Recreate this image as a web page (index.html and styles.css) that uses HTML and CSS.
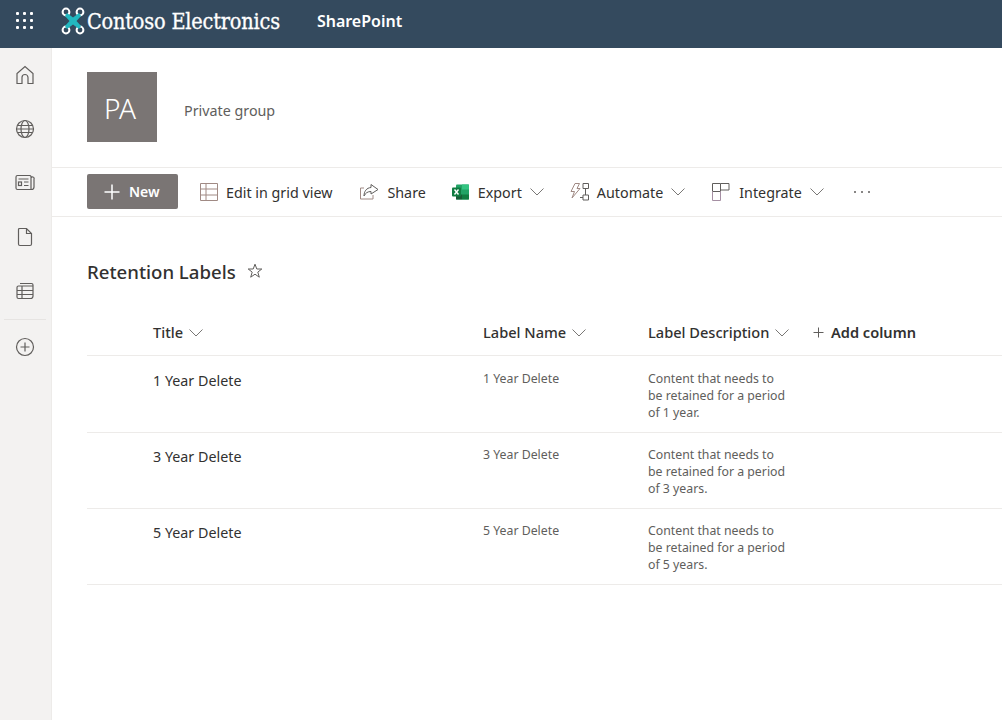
FILE: index.html
```html
<!DOCTYPE html>
<html lang="en">
<head>
	<meta charset="utf-8">
	<title>Retention Labels</title>
	<link rel="stylesheet" href="styles.css">
</head>
<body>

	<header class="suite-bar">
		<svg class="waffle" viewBox="0 0 18 18" width="18" height="18" fill="#fff">
			<rect x="0" y="0" width="3" height="3" rx="1"/><rect x="7" y="0" width="3" height="3" rx="1"/><rect x="14" y="0" width="3" height="3" rx="1"/>
			<rect x="0" y="7" width="3" height="3" rx="1"/><rect x="7" y="7" width="3" height="3" rx="1"/><rect x="14" y="7" width="3" height="3" rx="1"/>
			<rect x="0" y="14" width="3" height="3" rx="1"/><rect x="7" y="14" width="3" height="3" rx="1"/><rect x="14" y="14" width="3" height="3" rx="1"/>
		</svg>
		<svg class="logo" viewBox="0 0 24 28" width="24" height="28">
			<g fill="none" stroke="#fff" stroke-width="2">
				<circle cx="5" cy="5" r="3.4"/><circle cx="19" cy="5" r="3.4"/><circle cx="5" cy="23" r="3.4"/><circle cx="19" cy="23" r="3.4"/>
			</g>
			<path d="M6 6 L12 10.5 L18 6 L20 9 L15.5 14 L20 19 L18 22 L12 17.5 L6 22 L4 19 L8.500 14 L4 9 Z" fill="#22b8c0"/>
		</svg>
		<span class="brand">Contoso Electronics</span>
		<span class="app-name">SharePoint</span>
	</header>

	<div class="shell">
		<nav class="side-rail">
			<svg viewBox="0 0 20 20" width="20" height="20"><path d="M2 18.500V8.500L10 1.500L18 8.500V18.500H13V12.500A3 3 0 0 0 7 12.500V18.500Z"/></svg>
			<svg viewBox="0 0 20 20" width="20" height="20"><circle cx="10" cy="10" r="8.500"/><ellipse cx="10" cy="10" rx="4" ry="8.500"/><path d="M2.500 6.500H17.500M1.500 10H18.500M2.500 13.500H17.500"/></svg>
			<svg viewBox="0 0 20 20" width="20" height="20"><path d="M16 4.500V3.500A1.500 1.500 0 0 0 14.500 2.500H2.500A1.500 1.500 0 0 0 1 4V15A1.500 1.500 0 0 0 2.500 16.500H16.500A2.500 2.500 0 0 0 19 14V6A1.500 1.500 0 0 0 16 5V16"/><path d="M3.500 6H13.500M9 9H13.500M9 12.500H13.500"/><rect x="3.500" y="9" width="3" height="3.500"/></svg>
			<svg viewBox="0 0 20 20" width="20" height="20"><path d="M4.500 1.500H11.500L16.500 6.500V17A1.500 1.500 0 0 1 15 18.500H5A1.500 1.500 0 0 1 3.500 17V2.500A1 1 0 0 1 4.500 1.500ZM11.500 1.500V6.500H16.500"/></svg>
			<svg viewBox="0 0 20 20" width="20" height="20"><path d="M5 2.500H16.500A1.500 1.500 0 0 1 18 4V15A2.500 2.500 0 0 1 15.500 17.500H3.500A1.500 1.500 0 0 1 2 16V6.500A1.500 1.500 0 0 1 3.500 5H18M2 9.500H18M2 13.500H18M7 5V17.500"/></svg>
			<div class="rail-rule"></div>
			<svg viewBox="0 0 20 20" width="20" height="20"><circle cx="10" cy="10" r="8.500"/><path d="M10 5.500V14.500M5.500 10H14.500"/></svg>
		</nav>

		<main class="content">
			<section class="site-head">
				<div class="site-tile">PA</div>
				<span class="site-type">Private group</span>
			</section>

			<section class="command-bar">
				<button class="btn-new">
					<svg viewBox="0 0 16 16" width="16" height="16"><path d="M8 0.500V15.500M0.500 8H15.500"/></svg>
					New
				</button>
				<span class="cmd cmd-grid">
					<svg class="ico" viewBox="0 0 18 18" width="18" height="18"><path class="tan" d="M0.500 0.500H17.500V17.500H0.500ZM0.500 6H17.500M0.500 12H17.500M6 0.500V17.500"/></svg>
					Edit in grid view
				</span>
				<span class="cmd cmd-share">
					<svg class="ico" viewBox="0 0 19 18" width="19" height="18"><path class="tan" d="M4 5H0.500V16H13V12"/><path class="grey" d="M11 1.500L18 6.500L11 11V8.500C7.500 8.500 5.500 10 4 13C4 8.500 6.500 4.800 11 4.500Z"/></svg>
					Share
				</span>
				<span class="cmd cmd-export">
					<svg class="ico" viewBox="0 0 17 16" width="17" height="16">
						<rect x="4" y="0.500" width="13" height="15" rx="1" fill="#21a366"/>
						<rect x="10" y="0.500" width="7" height="5" fill="#33c481"/>
						<rect x="10" y="10.500" width="7" height="5" fill="#107c41"/>
						<rect x="4" y="10.500" width="6" height="5" fill="#185c37"/>
						<rect x="0" y="3.500" width="9" height="9" rx="1" fill="#107c41"/>
						<path d="M2.500 5.500L6.500 10.500M6.500 5.500L2.500 10.500" class="white"/>
					</svg>
					Export
					<svg class="chev" viewBox="0 0 14 8" width="14" height="8"><path d="M0.500 0.500L7 7L13.500 0.500"/></svg>
				</span>
				<span class="cmd cmd-automate">
					<svg class="ico" viewBox="0 0 19 18" width="19" height="18"><path class="tan" d="M5 0.500H9.500L7 5.500H10L2 15L4.500 8.500H1Z"/><path class="grey" d="M13 0.500H18.500V5.500H13ZM13 12H18.500V17H13ZM15.500 5.500V12M10 14.500H13"/></svg>
					Automate
					<svg class="chev" viewBox="0 0 14 8" width="14" height="8"><path d="M0.500 0.500L7 7L13.500 0.500"/></svg>
				</span>
				<span class="cmd cmd-integrate">
					<svg class="ico" viewBox="0 0 18 18" width="18" height="18"><path class="grey" d="M0.500 0.500H8.500V8.500H0.500ZM8.500 0.500H17V7H8.500"/><path class="mauve" d="M0.500 8.500V17.500H8.500V8.500"/></svg>
					Integrate
					<svg class="chev" viewBox="0 0 14 8" width="14" height="8"><path d="M0.500 0.500L7 7L13.500 0.500"/></svg>
				</span>
				<span class="cmd-more"><i></i><i></i><i></i></span>
			</section>

			<section class="list-title">
				<h1>Retention Labels</h1>
				<svg class="star" viewBox="0 0 16 16" width="16" height="16"><path d="M8 1.200L9.800 6H14.800L10.800 9.100L12.300 14.200L8 11.200L3.700 14.200L5.200 9.100L1.200 6H6.200Z"/></svg>
			</section>

			<section class="list">
				<div class="list-row list-head">
					<div class="col-title">Title <svg class="chev-sm" viewBox="0 0 14 8" width="14" height="8"><path d="M0.500 0.500L7 7L13.500 0.500"/></svg></div>
					<div>Label Name <svg class="chev-sm" viewBox="0 0 14 8" width="14" height="8"><path d="M0.500 0.500L7 7L13.500 0.500"/></svg></div>
					<div>Label Description <svg class="chev-sm" viewBox="0 0 14 8" width="14" height="8"><path d="M0.500 0.500L7 7L13.500 0.500"/></svg></div>
					<div class="col-add"><svg viewBox="0 0 11 11" width="11" height="11"><path d="M5.500 0.500V10.500M0.500 5.500H10.500"/></svg>Add column</div>
				</div>
				<div class="list-row">
					<div class="col-title cell-title">1 Year Delete</div>
					<div class="cell">1 Year Delete</div>
					<div class="cell">Content that needs to be retained for a period of 1 year.</div>
				</div>
				<div class="list-row">
					<div class="col-title cell-title">3 Year Delete</div>
					<div class="cell">3 Year Delete</div>
					<div class="cell">Content that needs to be retained for a period of 3 years.</div>
				</div>
				<div class="list-row">
					<div class="col-title cell-title">5 Year Delete</div>
					<div class="cell">5 Year Delete</div>
					<div class="cell">Content that needs to be retained for a period of 5 years.</div>
				</div>
			</section>
		</main>
	</div>

</body>
</html>
```

FILE: styles.css
```css
html, body {
	margin: 0;
	height: 100%;
	overflow: hidden;
}
body {
	font-family: 'Noto Sans', 'Open Sans', sans-serif;
	color: #323130;
	background-color: #fff;
}
svg {
	display: block;
	flex: none;
}

/* top bar */
.suite-bar {
	display: flex;
	align-items: center;
	height: 48px;
	box-sizing: border-box;
	padding-bottom: 6px;
	background-color: #344a5e;
	color: #fff;
}
.waffle {
	margin-left: 16px;
}
.logo {
	margin-left: 27px;
}
.brand {
	margin-left: 2px;
	font-family: 'DejaVu Serif', serif;
	font-size: 21.500px;
	font-stretch: condensed;
	letter-spacing: -0.200px;
	-webkit-text-stroke: 0.3px #fff;
}
.app-name {
	margin-left: 37px;
	font-size: 16px;
	font-weight: 600;
}

.shell {
	display: flex;
	height: 672px;
}

/* left rail */
.side-rail {
	display: flex;
	flex-direction: column;
	align-items: center;
	flex: none;
	width: 52px;
	padding: 17px 1px 0 0;
	box-sizing: border-box;
	background-color: #f3f2f1;
	border-right: 1px solid #edebe9;
	gap: 34px;
}
.side-rail svg {
	fill: none;
	stroke: #605e5c;
	stroke-width: 1.200;
}
.rail-rule {
	width: 42px;
	height: 1px;
	margin: -16px 0 -17px;
	background-color: #e6e4e2;
}

.content {
	flex: 1;
	min-width: 0;
}

/* site header */
.site-head {
	display: flex;
	align-items: flex-start;
	height: 95px;
	padding: 24px 0 0 35px;
	border-bottom: 1px solid #edebe9;
}
.site-tile {
	display: flex;
	align-items: center;
	justify-content: center;
	width: 70px;
	height: 70px;
	box-sizing: border-box;
	padding: 2px 4px 0 0;
	background-color: #7a7574;
	color: #fff;
	font-size: 28px;
	font-weight: 300;
}
.site-type {
	margin: 29px 0 0 27px;
	font-size: 14.300px;
	color: #605e5c;
}

/* command bar */
.command-bar {
	display: flex;
	align-items: center;
	height: 48px;
	padding-left: 35px;
	border-bottom: 1px solid #edebe9;
	font-size: 14.300px;
}
.btn-new {
	display: flex;
	align-items: center;
	gap: 9px;
	width: 91px;
	height: 35px;
	margin-bottom: 1px;
	padding: 0 0 0 17px;
	border: 0;
	border-radius: 2px;
	background-color: #7a7574;
	color: #fff;
	font-family: inherit;
	font-size: 14px;
	font-weight: 600;
}
.btn-new svg {
	fill: none;
	stroke: #fff;
	stroke-width: 1.500;
}
.cmd {
	display: flex;
	align-items: center;
	white-space: nowrap;
}
.ico {
	margin-right: 8px;
	fill: none;
	stroke-width: 1;
}
.ico .tan {
	stroke: #a08a84;
}
.ico .grey {
	stroke: #605e5c;
}
.ico .mauve {
	stroke: #a58fa3;
}
.ico .white {
	stroke: #fff;
	stroke-width: 1.400;
}
.chev {
	margin-left: 8px;
	fill: none;
	stroke: #797775;
	stroke-width: 1;
}
.cmd-grid {
	margin-left: 22px;
}
.cmd-share {
	margin-left: 28px;
}
.cmd-export .ico,
.cmd-integrate .ico {
	margin-right: 9px;
}
.cmd-export {
	margin-left: 26px;
}
.cmd-automate {
	margin-left: 26px;
}
.cmd-integrate {
	margin-left: 27px;
}
.cmd-more {
	display: flex;
	gap: 5px;
	margin: 0 0 1px 30px;
}
.cmd-more i {
	width: 2px;
	height: 2px;
	border-radius: 50%;
	background-color: #605e5c;
}

/* list */
.list-title {
	display: flex;
	align-items: center;
	height: 26px;
	margin: 41px 0 0 35px;
}
.list-title h1 {
	margin: 0;
	font-size: 18.600px;
	font-weight: 500;
}
.star {
	margin-left: 11px;
	fill: none;
	stroke: #605e5c;
	stroke-width: 1;
}
.list {
	margin: 24px 0 0 35px;
}
.list-row {
	display: grid;
	grid-template-columns: 66px 330px 165px 165px 1fr;
	height: 76px;
	box-sizing: border-box;
	padding-top: 14px;
	border-bottom: 1px solid #edebe9;
	font-size: 12.300px;
	line-height: 17px;
	color: #605e5c;
}
.list-head {
	align-items: center;
	height: 48px;
	padding-top: 2px;
	font-size: 14.600px;
	font-weight: 500;
	color: #323130;
}
.list-head + .list-row {
	height: 77px;
	padding-top: 15px;
}
.list-row .col-title {
	grid-column: 2;
}
.list-head > div {
	display: flex;
	align-items: center;
	gap: 6px;
	white-space: nowrap;
}
.chev-sm {
	fill: none;
	stroke: #797775;
	stroke-width: 1;
}
.list-head .col-add {
	gap: 7px;
	font-weight: 600;
}
.col-add svg {
	fill: none;
	stroke: #605e5c;
	stroke-width: 1;
}
.cell {
	padding-right: 24px;
	margin-top: -1px;
}
.cell-title {
	font-size: 14.300px;
	line-height: 20px;
	color: #323130;
}
```
